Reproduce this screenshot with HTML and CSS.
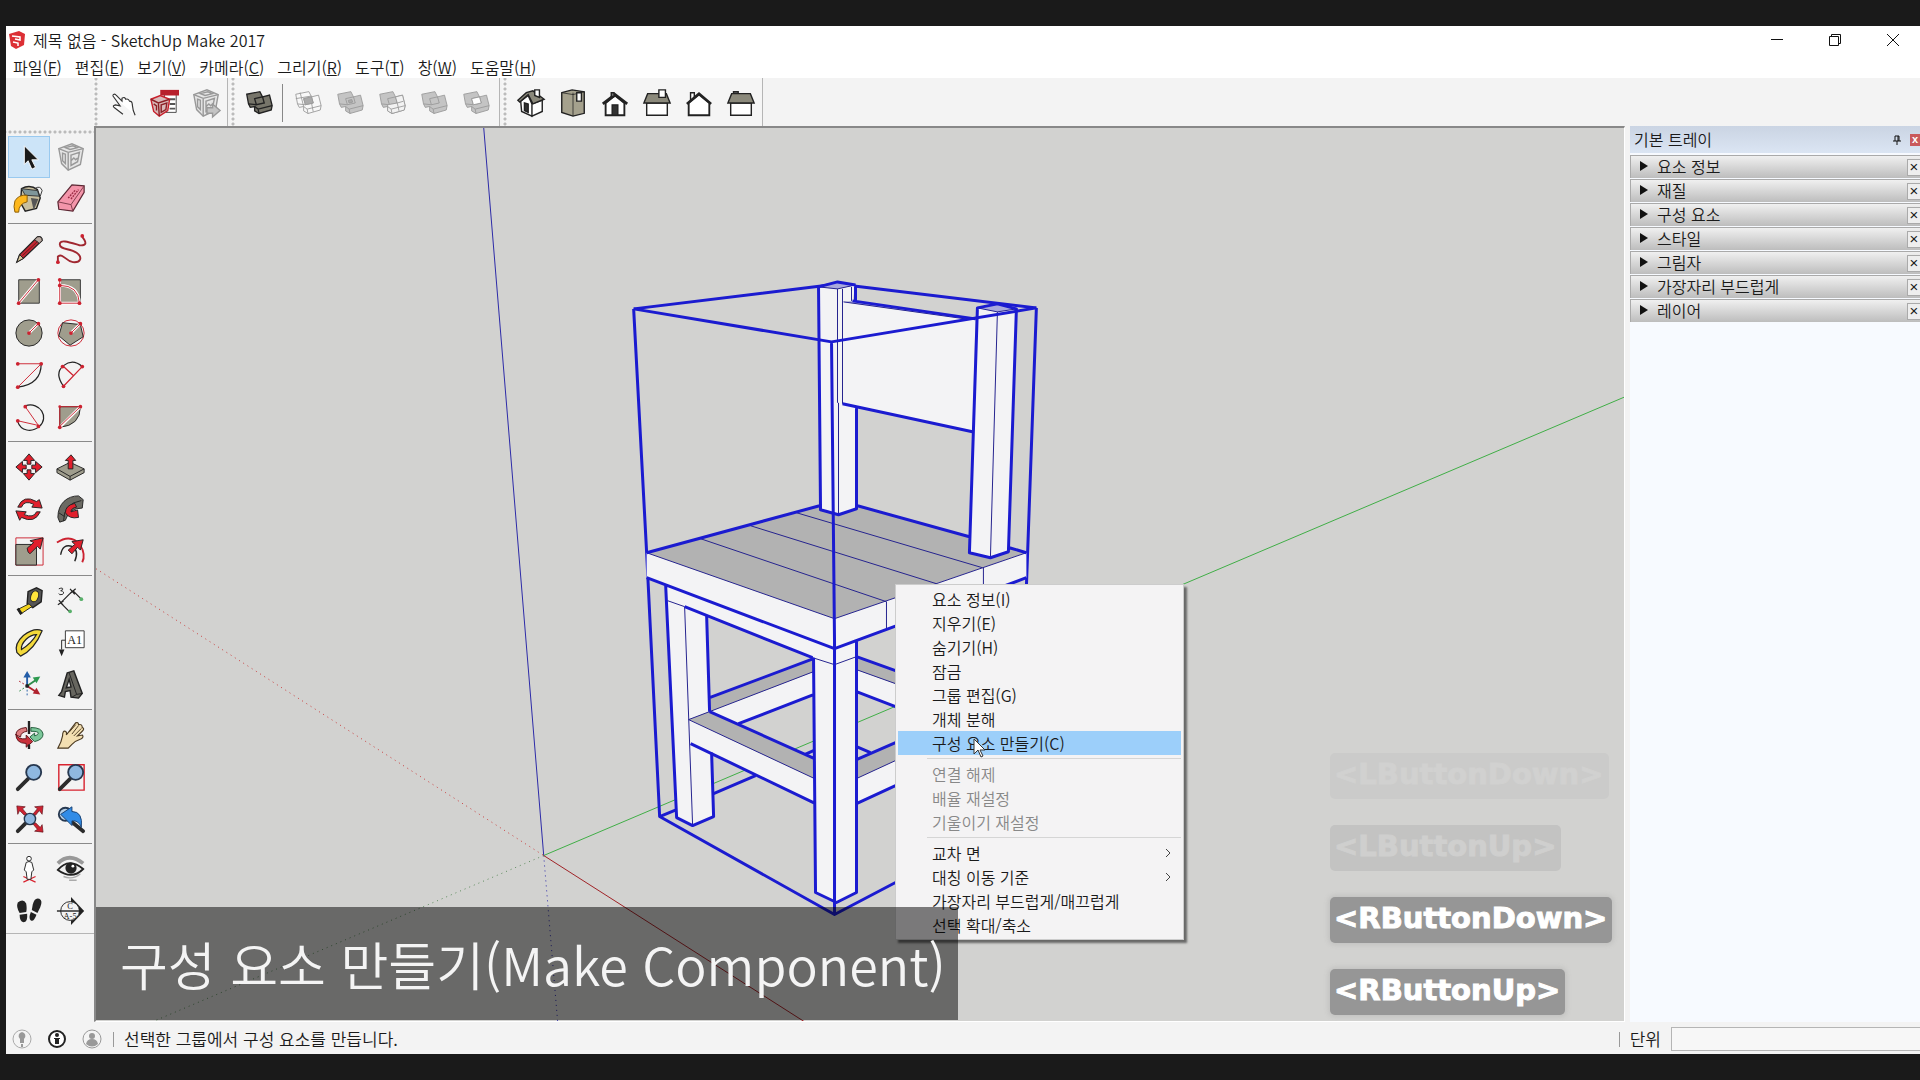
FILE: index.html
```html
<!DOCTYPE html>
<html lang="ko">
<head>
<meta charset="utf-8">
<title>제목 없음 - SketchUp Make 2017</title>
<link rel="stylesheet" href="styles.css">
</head>
<body>
<svg class="defs" aria-hidden="true">
  <symbol id="solids" viewBox="0 0 32 32"><path d="M2 6 17 3l3 6 8-2 3 12-1 5-14 4-5-3v-5l-5 1-2-4z"/><path d="M11 11l9-2 2 7-9 2zM4 17l9 1M11 20l4 3 16-4M15 23l1 5" fill="none"/></symbol>
  <symbol id="boxmark" viewBox="0 0 32 32"><path d="M3 7 17 2l12 5-3 17-13 6L6 23z"/><path d="M3 7l10 4 16-4M13 11v19M7 12l3 1v10l-3-3zM16 14l9-3-2 10-7 4zM16 20l3-3 2 2 2-2M10 6l8-2 5 2-8 2z" fill="none"/></symbol>
</svg>
<main class="app">
  <header class="titlebar">
    <svg class="logo" viewBox="0 0 16 18"><path d="M0 3 10 0l6 3-1 11-8 4-5-3z" fill="#dc2f35"/><path d="M3 5l8 1v3L6 8M4 11l5 1v3" fill="none" stroke="#fff" stroke-width="1.500"/></svg>
    <h1 class="title">제목 없음 - SketchUp Make 2017</h1>
    <div class="winbtns">
      <button aria-label="최소화"><svg viewBox="0 0 14 14"><path d="M1 6.500h12"/></svg></button>
      <button aria-label="이전 크기로"><svg viewBox="0 0 14 14"><path d="M1.500 3.500h9v9h-9zM3.500 3.500v-2h9v9h-2"/></svg></button>
      <button aria-label="닫기"><svg viewBox="0 0 14 14"><path d="M1 1l12 12M13 1 1 13"/></svg></button>
    </div>
  </header>
  <nav class="menubar">
    <button>파일(<u>F</u>)</button><button>편집(<u>E</u>)</button><button>보기(<u>V</u>)</button><button>카메라(<u>C</u>)</button><button>그리기(<u>R</u>)</button><button>도구(<u>T</u>)</button><button>창(<u>W</u>)</button><button>도움말(<u>H</u>)</button>
  </nav>
  <div class="toolbar">
    <div class="bar">
      <button aria-label="상호 작용"><svg class="ic" viewBox="0 0 32 32"><path d="M6 8q2-3 4 0l6 6v-3q3-2 4 1 3-1 4 2 3 0 3 4l1 6 2 5M6 8l8 11-5-1q-4 1-1 3l9 7" fill="#fff" stroke="#333" stroke-width="1.200"/></svg></button>
      <button aria-label="구성 요소"><svg class="ic" viewBox="0 0 32 32"><path d="M16 4h13v22H18z" fill="#fff" stroke="#444"/><path d="M12 2h20v6H12z" fill="#b8202c"/><path d="M22 12h6M22 17h6M22 22h6" stroke="#555" stroke-width="2"/><path d="M2 12l10-4 10 4-2 12-9 6-6-5z" fill="#d9b9b9" stroke="#c8202c" stroke-width="1.500"/><path d="M2 12l8 4 12-4M10 16l1 14M13 18l6-2-1 7-5 3zM5 17l3 2v5" fill="none" stroke="#8c2026" stroke-width="1.500"/></svg></button>
      <button aria-label="구성 요소 바꾸기"><svg class="ic mute" viewBox="0 0 32 32"><use href="#boxmark"/><path d="M17 21h6v-4l8 7-8 7v-4h-6z" fill="#c4c4c4"/></svg></button>
    </div>
    <div class="bar solids">
      <button aria-label="외부 쉘"><svg class="ic solid-on"><use href="#solids"/></svg></button>
      <i class="vline"></i>
      <button aria-label="교차"><svg class="ic solid-wire" viewBox="0 0 32 32"><use href="#solids"/><path d="M11 11l9-2 2 7-9 2z" fill="#aaa"/><path d="M7 4l4 16M2 11l18-3M20 16l2 10" fill="none"/></svg></button>
      <button aria-label="결합"><svg class="ic solid-off" viewBox="0 0 32 32"><use href="#solids"/><path d="M14 13l4-1 1 3-4 1z" fill="#aaa"/></svg></button>
      <button aria-label="빼기"><svg class="ic solid-off" viewBox="0 0 32 32"><use href="#solids"/><path d="M20 9l8-2 3 12-1 5-14 4-5-3v-7l11-2z" fill="#f2f2f2"/><path d="M11 20l4 3 16-4M15 23l1 5M22 16l7-2M22 16l2 9" fill="none"/></svg></button>
      <button aria-label="자르기"><svg class="ic solid-off"><use href="#solids"/></svg></button>
      <button aria-label="분할"><svg class="ic solid-off" viewBox="0 0 32 32"><use href="#solids"/><path d="M11 11l9-2 2 7-9 2z" fill="#fff"/></svg></button>
    </div>
    <div class="bar views">
      <button aria-label="등각 보기"><svg class="ic" viewBox="0 0 32 32"><path d="M5 14l8-6 4 9v13L6 25zM17 17l11-4v12l-11 5z" fill="#fff"/><path d="M9 16l4 1v9l-4-2z" fill="#333"/><path d="M2 13 11 5l7-2 12 9-12 5-5-10-9 8z" fill="#8b897b"/><path d="M20 2h5v8l-5-2z" fill="#fff"/></svg></button>
      <button aria-label="위에서"><svg class="ic" viewBox="0 0 32 32"><path d="M4 5 15 2l13 2v23l-12 3L4 26z" fill="#a5a18d"/><path d="M16 5v25M4 5l12 2 12-3" fill="none" stroke-width=".8"/><path d="M20 5h5v9h-5z" fill="#fff"/></svg></button>
      <button aria-label="앞에서"><svg class="ic" viewBox="0 0 32 32"><path d="M6 16v13h20V16L16 8z" fill="#fff" stroke-width="2"/><path d="M13 18h6v11h-6z" fill="#333"/><path d="M3 17 16 7l13 10" fill="none" stroke-width="3"/><path d="M12 5h3v4h-3z" fill="#777"/></svg></button>
      <button aria-label="오른쪽에서"><svg class="ic" viewBox="0 0 32 32"><path d="M5 16h22v13H5z" fill="#fff"/><path d="M6 6h20l4 10H2z" fill="#8b897b"/><path d="M18 2h7v8h-7z" fill="#fff"/></svg></button>
      <button aria-label="뒤에서"><svg class="ic" viewBox="0 0 32 32"><path d="M7 5h4v8H7z" fill="#fff"/><path d="M5 16v13h22V16L16 7z" fill="#fff" stroke-width="2"/><path d="M3 17 16 6l13 11" fill="none" stroke-width="2.500"/></svg></button>
      <button aria-label="왼쪽에서"><svg class="ic" viewBox="0 0 32 32"><path d="M5 16h22v13H5z" fill="#fff"/><path d="M8 4h5v3H8z" fill="#777"/><path d="M6 6h20l4 10H2z" fill="#8b897b"/></svg></button>
    </div>
  </div>

  <div class="work">
    <aside class="tools">
      <div class="grp">
        <button class="on" aria-label="선택"><svg class="ic" viewBox="0 0 32 32"><path d="M11 4v20l4-4 4 9 4-2-4-8h7z" fill="#1a1a1a" stroke="#fff"/></svg></button>
        <button aria-label="구성 요소 만들기"><svg class="ic mute"><use href="#boxmark"/></svg></button>
        <button aria-label="페인트 통"><svg class="ic" viewBox="0 0 32 32"><path d="M8 5q9-5 17 1l3 9-4 11-12 3-5-9z" fill="#c9bf9e" stroke="#222" stroke-width="1.500"/><path d="M8 5l17 2 2 6-15-1z" fill="#7f969a" stroke="#333"/><path d="M18 15l8 1-5 12z" fill="#555"/><path d="M22 5q6-4 8 2l-2 6" fill="none" stroke="#333"/><path d="M14 12q-9-1-13 6-2 6 0 12h4q0-9 9-11z" fill="#fdb71c" stroke="#8a5a00"/></svg></button>
        <button aria-label="지우개"><svg class="ic" viewBox="0 0 32 32"><path d="M2 19 17 1l13 1v7L18 29 3 27z" fill="#f495aa" stroke="#5b2733" stroke-width="1.300"/><path d="M2 19l14 3L30 2M16 22l2 7" fill="none" stroke="#7c3c4a"/><path d="M13 15l8-9M16 16l8-10" stroke="#9c2d46" stroke-width="1.500" stroke-dasharray="2 1"/></svg></button>
      </div>
      <div class="grp">
        <button aria-label="선"><svg class="ic" viewBox="0 0 32 32"><path d="M3 30l3-8L25 3q5-1 5 4L10 26z" fill="#c12832" stroke="#222" stroke-width="1.300"/><path d="M3 30l3-8 4 4z" fill="#d9c79a" stroke="#222"/><path d="M22 6l3-3q5-1 5 4l-3 3z" fill="#b9a9a0" stroke="#222"/><path d="M9 23 25 8" stroke="#6f141b"/></svg></button>
        <button aria-label="자유 곡선" class="r"><svg class="ic" viewBox="0 0 32 32"><path d="M28 3q8 10-3 9C15 9 4 5 4 11s11 4 18 9 4 11-4 10S8 20 2 24v5" fill="none" stroke="#a02730" stroke-width="2"/><circle cx="28" cy="2" r="2"/><circle cx="2" cy="30" r="2"/></svg></button>
        <button aria-label="직사각형" class="r"><svg class="ic" viewBox="0 0 32 32"><path d="M5 4h22v25H5z" fill="#9f9d8d" stroke="#333"/><path d="M5 29 26 4" stroke="#fff" stroke-width="3"/><path d="M5 29 26 4" stroke="#cc2230"/><circle cx="26" cy="4" r="2"/><circle cx="5" cy="29" r="2"/></svg></button>
        <button aria-label="회전된 직사각형" class="r"><svg class="ic" viewBox="0 0 32 32"><path d="M5 4h21v25H5z" fill="#9f9d8d" stroke="#333"/><path d="M4 4v25h22M4 10q20 0 21 19" fill="none" stroke="#fff" stroke-width="3"/><path d="M4 4v25h21M4 10q20 0 21 19" fill="none" stroke="#cc2230"/><circle cx="4" cy="4" r="2"/><circle cx="4" cy="10" r="2"/><circle cx="4" cy="29" r="2"/><circle cx="25" cy="29" r="2"/></svg></button>
        <button aria-label="원" class="r"><svg class="ic" viewBox="0 0 32 32"><path d="M30 16a14 14 0 1 1-28 0 14 14 0 1 1 28 0z" fill="#9f9d8d" stroke="#222"/><path d="M16 16 26 6" stroke="#fff" stroke-width="3"/><path d="M16 16 26 6" stroke="#cc2230"/><circle cx="16" cy="16" r="2"/><circle cx="26" cy="6" r="2"/></svg></button>
        <button aria-label="다각형" class="r"><svg class="ic" viewBox="0 0 32 32"><path d="M30 16a14 14 0 1 1-28 0 14 14 0 1 1 28 0z" fill="none" stroke="#cc2230"/><path d="M26 7l3 13-14 9L3 19l4-14z" fill="#9f9d8d" stroke="#222"/><path d="M16 16 26 6" stroke="#fff" stroke-width="3"/><path d="M16 16 26 6" stroke="#cc2230"/><circle cx="16" cy="16" r="2"/><circle cx="26" cy="6" r="2"/></svg></button>
        <button aria-label="호" class="r"><svg class="ic" viewBox="0 0 32 32"><path d="M29 4q0 22-25 25" fill="none" stroke="#222" stroke-width="1.300"/><path d="M4 4h25L4 29" fill="none" stroke="#cc2230"/><circle cx="4" cy="4" r="2"/><circle cx="29" cy="4" r="2"/><circle cx="4" cy="29" r="2"/></svg></button>
        <button aria-label="2점 호" class="r"><svg class="ic" viewBox="0 0 32 32"><path d="M8 28Q-2 14 8 6q10-8 20 1" fill="none" stroke="#222" stroke-width="1.300"/><path d="M8 28 28 7M8 7l11 10" fill="none" stroke="#cc2230" stroke-width="1.300"/><circle cx="8" cy="28" r="2"/><circle cx="28" cy="7" r="2"/><circle cx="7" cy="7" r="2"/></svg></button>
        <button aria-label="3점 호" class="r"><svg class="ic" viewBox="0 0 32 32"><path d="M12 4c16-5 26 13 15 22-8 7-20 5-23-5" fill="none" stroke="#222" stroke-width="1.300"/><path d="M12 5l14 20-22-5" fill="none" stroke="#cc2230"/><circle cx="12" cy="5" r="2"/><circle cx="26" cy="26" r="2"/><circle cx="4" cy="20" r="2"/></svg></button>
        <button aria-label="파이" class="r"><svg class="ic" viewBox="0 0 32 32"><path d="M4 5h22q0 20-22 22z" fill="#9f9d8d" stroke="#222"/><path d="M4 27 26 5" fill="none" stroke="#fff" stroke-width="3"/><path d="M4 27V5h22L4 26" fill="none" stroke="#cc2230"/><circle cx="4" cy="5" r="1.500"/><circle cx="26" cy="5" r="2"/><circle cx="4" cy="27" r="2"/></svg></button>
      </div>
      <div class="grp">
        <button aria-label="이동" class="fat"><svg class="ic" viewBox="0 0 32 32"><path d="M16 2l6 7h-4v4h-4V9h-4zM16 30l-6-7h4v-4h4v4h4zM2 16l7-6v4h4v4H9v4zM30 16l-7 6v-4h-4v-4h4v-4z"/></svg></button>
        <button aria-label="밀기/끌기" class="fat"><svg class="ic" viewBox="0 0 32 32"><path d="M1 18l14-7 15 7v4L15 30 1 22z" fill="#9f9d8d"/><path d="M1 18l14 8 15-8M15 26v4" fill="none"/><path d="M16 3l5 6h-3v9h-5V9h-3z"/></svg></button>
        <button aria-label="회전" class="fat"><svg class="ic" viewBox="0 0 32 32"><path d="M4 14Q10 0 24 8l3-2 3 9-11-1 2-3Q11 6 8 14zM28 19Q22 32 8 25l-2 3-4-10 11 1-2 3q10 4 13-3z"/></svg></button>
        <button aria-label="따라가기" class="fat"><svg class="ic" viewBox="0 0 32 32"><path d="M2 25C2 10 12 2 24 2l5 4-1 9q-14 0-18 13l-6 2z" fill="#6b6a63"/><path d="M8 29Q8 10 27 7M3 20l6 4" fill="none"/><path d="M10 20q0-8 10-10l2 4q-6 1-6 5l7-2 1 8q-10 2-14-5z"/></svg></button>
        <button aria-label="배율" class="fat"><svg class="ic" viewBox="0 0 32 32"><path d="M2 2h29v29H2z" fill="none" stroke="#cc2230"/><path d="M2 9h22v22H2z" fill="#9f9d8d"/><path d="M31 2l-3 12-3-3-8 8-2-2-1-4 7-6-4-2z"/></svg></button>
        <button aria-label="오프셋" class="fat"><svg class="ic" viewBox="0 0 32 32"><path d="M1 7Q16-3 26 10q6 10 2 18" fill="none" stroke="#cc2230" stroke-width="2"/><path d="M5 20q2-12 12-9 8 4 3 16" fill="none" stroke-width="1.500"/><path d="M29 4l-3 11-3-3-6 7-4-4 7-6-3-3z"/></svg></button>
      </div>
      <div class="grp">
        <button aria-label="줄자"><svg class="ic" viewBox="0 0 32 32"><path d="M15 6l9-4 6 3-1 12-9 6-6-4z" fill="#555" stroke="#222" stroke-width="1.500"/><ellipse cx="22" cy="11" rx="4" ry="6" fill="#ffe53b" stroke="#222" transform="rotate(20 22 11)"/><path d="M4 25l12-6 3 3L7 30z" fill="#f5d51e" stroke="#222"/><path d="M4 24l4 6" stroke="#222" stroke-width="3"/></svg></button>
        <button aria-label="치수"><svg class="ic" viewBox="0 0 32 32"><path d="M5 18 18 5M5 18l9 9M18 5l9 9M2 20l6-4M15 8l6-5M3 15l5 6M15 3l5 6" stroke="#222" stroke-width="1.300" fill="none"/><path d="M3 3q5-2 4 1l-2 1q5 1 2 4-4 1-4-1" stroke="#222" fill="none"/><circle cx="27" cy="14" r="2" fill="#58b06a"/><circle cx="15" cy="27" r="2" fill="#58b06a"/></svg></button>
        <button aria-label="각도기"><svg class="ic" viewBox="0 0 32 32"><path d="M30 3Q22-1 10 8 0 17 3 26l4 4Q22 23 30 3zM24 7q-5 9-16 16-1-5 5-11 5-5 11-5z" fill="#f3d93b" fill-rule="evenodd" stroke="#222" stroke-width="1.300"/></svg></button>
        <button aria-label="텍스트"><svg class="ic" viewBox="0 0 32 32"><path d="M10 3h20v18H10z" fill="#fff" stroke="#333"/><path d="M10 13H6v10" fill="none" stroke="#222"/><path d="M3 23h6l-3 7z" fill="#222"/><text x="20" y="17" class="a1">A1</text></svg></button>
        <button aria-label="축"><svg class="ic" viewBox="0 0 32 32"><path d="M14 17V5" stroke="#245ea8" stroke-width="2"/><path d="M10 8l4-7 4 7z" fill="#245ea8"/><path d="M14 17l9-6" stroke="#2e8b4a" stroke-width="2"/><path d="M20 8l8-1-4 7z" fill="#2e9a50"/><path d="M14 17l9 6" stroke="#b0232e" stroke-width="2"/><path d="M24 19l4 7-8-1z" fill="#b0232e"/><path d="M14 17l-10-6" stroke="#b0232e" stroke-dasharray="2 2"/><path d="M14 17l-9 6" stroke="#2e8b4a" stroke-dasharray="2 2"/><path d="M14 17v11" stroke="#245ea8" stroke-dasharray="2 2"/><circle cx="14" cy="17" r="2" fill="#222"/></svg></button>
        <button aria-label="3D 텍스트"><svg class="ic" viewBox="0 0 32 32"><path d="M12 3l7-2 9 24-4 5-8-1-1-7-5 1-1 6-6-2 3-4zM14 10l-3 9 5-1z" fill="#67665f" fill-rule="evenodd" stroke="#222" stroke-width="1.500"/><path d="M14 3l8 23 6-1M22 26l-5 3" fill="none" stroke="#222"/></svg></button>
      </div>
      <div class="grp">
        <button aria-label="궤도"><svg class="ic" viewBox="0 0 32 32"><path d="M13 8Q2 9 2 16l5 2q0-5 7-6z" fill="#dc7d80" stroke="#5c1118"/><path d="M18 8q12 0 13 7 0 6-9 8l-5-5 5-4v3q4-1 4-3t-8-2z" fill="#7cc79a" stroke="#1e5a38"/><path d="M2 15q2 6 11 5v-4l7 7-7 6v-4Q2 25 2 15z" fill="#c9303a" stroke="#5c1118"/><path d="M16 1v14M16 26v5" stroke="#222" stroke-width="2.500"/></svg></button>
        <button aria-label="이동 보기"><svg class="ic" viewBox="0 0 32 32"><path d="M2 30q4-7 5-13 0-6 3-5 2 1 1 4L21 3q3-1 3 2 4-1 4 3 3 1 0 4l-5 5 5-1q2 2-1 4-6 2-10 6l-4 4z" fill="#f3dfb2" stroke="#4b3a22" stroke-width="1.200"/><path d="M14 13l7-8M17 15l7-9M19 17l8-8" stroke="#4b3a22"/></svg></button>
        <button aria-label="확대/축소"><svg class="ic" viewBox="0 0 32 32"><path d="M4 29l11-11" stroke="#2b2b2b" stroke-width="4" stroke-linecap="round"/><circle cx="21" cy="11" r="8" fill="#8fb8e0" stroke="#27384f" stroke-width="2"/></svg></button>
        <button aria-label="창 확대"><svg class="ic" viewBox="0 0 32 32"><path d="M3 3h27v27H3z" fill="none" stroke="#d8232f" stroke-width="1.500"/><path d="M4 29l11-11" stroke="#2b2b2b" stroke-width="4" stroke-linecap="round"/><circle cx="21" cy="11" r="8" fill="#8fb8e0" stroke="#27384f" stroke-width="2"/></svg></button>
        <button aria-label="범위 확대"><svg class="ic" viewBox="0 0 32 32"><path d="M3 2l9 1-3 2 5 6-3 1-5-5-2 4zM31 2l-9 1 3 2-5 6 3 1 4-5 3 4zM31 30l-9-1 3-2-5-6 3-1 5 5 2-3z" fill="#cc2230" stroke="#5c1118" stroke-width=".7"/><path d="M4 29l8-8" stroke="#2b2b2b" stroke-width="4" stroke-linecap="round"/><circle cx="17" cy="16" r="6" fill="#8fb8e0" stroke="#27384f" stroke-width="1.500"/></svg></button>
        <button aria-label="이전"><svg class="ic" viewBox="0 0 32 32"><circle cx="10" cy="11" r="7" fill="#b4cee6" stroke="#27384f" stroke-width="2"/><path d="M18 20l11 9" stroke="#2b2b2b" stroke-width="4" stroke-linecap="round"/><path d="M5 11l12-8v5q12 0 10 17-3-8-10-7v5z" fill="#318ce7" stroke="#163f70"/></svg></button>
      </div>
      <div class="grp last">
        <button aria-label="카메라 위치"><svg class="ic" viewBox="0 0 32 32"><path d="M10 30l13-6M10 24l13 6" stroke="#d8232f" stroke-width="1.300"/><path d="M13 9q3-2 6 0l2 8-2 2-1 8h-4l-1-8-2-2z" fill="#fff" stroke="#222"/><circle cx="16" cy="5" r="2.500" fill="#fff" stroke="#222"/></svg></button>
        <button aria-label="둘러보기"><svg class="ic" viewBox="0 0 32 32"><path d="M2 10Q14-2 29 10" fill="none" stroke="#999" stroke-width="4"/><path d="M2 17Q14 3 29 16q-12 12-27 1z" fill="#eee" stroke="#222" stroke-width="2"/><circle cx="16" cy="15" r="6" fill="#222"/><circle cx="18" cy="13" r="1.500" fill="#fff"/><path d="M8 24q10 4 18-3M14 28h8" fill="none" stroke="#aaa" stroke-width="1.500"/></svg></button>
        <button aria-label="보행"><svg class="ic" viewBox="0 0 32 32"><path d="M4 7q6-5 9 1 1 6 0 9l-7 1Q2 12 4 7zM6 20l8-1q1 9-4 9-4-1-4-8zM20 9q2-8 7-6 4 2 1 9l-3 6-6-3zM18 17l6 3q-3 8-6 6-3-2 0-9z" fill="#222"/></svg></button>
        <button aria-label="단면"><svg class="ic" viewBox="0 0 32 32"><path d="M16 1l14 15-14 15z" fill="#222"/><circle cx="15" cy="16" r="10" fill="#f3f3f3" stroke="#222"/><path d="M1 16h28" stroke="#222" stroke-width="1.500"/><text x="15" y="14" class="sec">C</text><text x="15" y="24" class="sec">A-5</text></svg></button>
      </div>
    </aside>

    <section class="view">
      <svg class="scene" viewBox="95 127 1529 894" preserveAspectRatio="xMinYMin slice">
        <g fill="none" class="axes">
          <path d="M483 127 543 855" stroke="#2c2aa8"/><path d="M543 855 557 1022" stroke="#2c2aa8" stroke-dasharray="1 4"/>
          <path d="M543 855 1625 396" stroke="#3fae45"/><path d="M543 855 150 1022" stroke="#5a8a5a" stroke-dasharray="1 4"/>
          <path d="M543 855 805 1022" stroke="#a02226"/><path d="M95 568 543 855" stroke="#c83c3c" stroke-dasharray="1 4"/>
        </g>
        <g class="box"><path d="M633 308 837 283 1036 307M633 308 646 552 659 816 834 914 895 882M659 816 676 809M1036 307 1026 586M713 793 755 775M804 754 813 750M856 746 870 752"/></g>
        <g class="face">
          <path d="M709 711 813 671V694L738 723z"/><path class="top" d="M709 697 813 658V671L709 711z"/>
          <path d="M856 669 895 683V706L856 691z"/><path class="top" d="M856 656 895 670V683L856 669z"/>
          <path d="M856 778 895 760V785L856 803z"/><path class="top" d="M856 759 895 742V760L856 778z"/>
          <path d="M665 584 706 600 709 711 713 816 692 825 676 817z"/>
          <path d="M688 719 814 778V803L690 743z"/><path class="top" d="M688 719 709 711 814 758V778z"/>
          <path d="M665 584 834 648 856 640V656L834 664 812 657 667 600z"/>
          <path d="M813 655 834 662 856 654V892L836 902 815 892z"/>
          <path class="top" d="M646 552 819 505H857L1026 552 834 618z"/>
          <path d="M646 552 834 618V648L646 577z"/><path d="M834 618 1026 552V577L834 648z"/>
          <path d="M842 300 975 318 972 431 842 403z"/>
          <path d="M818 286 837 288 855 284 852 300H842V403L856 406V508L838 514 820 509z"/>
          <path d="M977 307 997 310 1016 308 1008 551 990 557 969 552z"/>
          <path class="tip" d="M818 286 837 281 855 284 837 288zM977 307 997 303 1016 308 997 311zM852 300 975 318 965 318 843 301z"/>
        </g>
        <g class="thin"><path d="M646 552 834 618 1026 552M796 512 982 567M750 525 936 583M700 538 886 601V628M983 567V590M837 288V402M842 288V403M838 402V514M851 286V300M843 301 965 318M997 311 990 557M667 600 684 606 692 825M812 657 834 664 856 656M709 711 813 671M688 719 709 711M688 719 814 778M856 669 895 683M856 778 895 760M856 778V803M818 286 837 288 855 284M977 307 997 311 1016 308"/></g>
        <g class="box"><path d="M646 552 819 505M857 505 969 536M1009 547 1026 552M646 577 834 648 1026 577M818 286 820 509 838 514 856 508V406M855 284V300M818 286 837 281 855 284M852 300 975 318M842 403 972 431M977 307 969 552 990 557 1008 551 1016 308 997 303zM665 584 676 817 692 825 713 816 711 752M684 606 812 657M706 614 709 711M709 697 813 658M738 723 813 694M709 711 814 758M690 743 815 803M813 657 815 892 836 902 856 892V640M856 656 895 670M856 691 895 706M856 759 895 742M856 803 895 785"/><path d="M633 308 831 341 1036 307M831 341 834 640V914"/></g>
      </svg>

      <ul class="keys">
        <li class="f1">&lt;LButtonDown&gt;</li><li class="f2">&lt;LButtonUp&gt;</li><li>&lt;RButtonDown&gt;</li><li>&lt;RButtonUp&gt;</li>
      </ul>

      <div class="ctx" role="menu">
        <button>요소 정보(I)</button><button>지우기(E)</button><button>숨기기(H)</button><button>잠금</button><button>그룹 편집(G)</button><button>개체 분해</button><button class="hot">구성 요소 만들기(C)</button>
        <hr>
        <button disabled>연결 해제</button><button disabled>배율 재설정</button><button disabled>기울이기 재설정</button>
        <hr>
        <button class="sub">교차 면<svg viewBox="0 0 6 10"><path d="M1 1l4 4-4 4"/></svg></button><button class="sub">대칭 이동 기준<svg viewBox="0 0 6 10"><path d="M1 1l4 4-4 4"/></svg></button><button>가장자리 부드럽게/매끄럽게</button><button>선택 확대/축소</button>
        <svg class="cursor" viewBox="0 0 13 20"><path d="M1 1v15l4-4 3 7 2-1-3-6h5z" fill="#fff" stroke="#333"/></svg>
      </div>
      <p class="caption">구성 요소 만들기(Make Component)</p>
    </section>

    <aside class="tray">
      <h2>기본 트레이<span><button class="pin" aria-label="고정"><svg viewBox="0 0 8 10"><path d="M2 6V1h4v5M0 6h8M4 6v4M5 1v5"/></svg></button><button class="x" aria-label="트레이 닫기">x</button></span></h2>
      <div class="row"><button class="name">요소 정보</button><button class="rm" aria-label="닫기">×</button></div>
      <div class="row"><button class="name">재질</button><button class="rm" aria-label="닫기">×</button></div>
      <div class="row"><button class="name">구성 요소</button><button class="rm" aria-label="닫기">×</button></div>
      <div class="row"><button class="name">스타일</button><button class="rm" aria-label="닫기">×</button></div>
      <div class="row"><button class="name">그림자</button><button class="rm" aria-label="닫기">×</button></div>
      <div class="row"><button class="name">가장자리 부드럽게</button><button class="rm" aria-label="닫기">×</button></div>
      <div class="row"><button class="name">레이어</button><button class="rm" aria-label="닫기">×</button></div>
    </aside>
  </div>

  <footer class="status">
    <svg viewBox="0 0 20 20"><circle cx="10" cy="10" r="9" fill="#f4f4f4" stroke="#aaa"/><path d="M10 3a4 4 0 0 1 2 7v4H8v-4a4 4 0 0 1 2-7zM9 15h2v3H9z" fill="#999"/></svg>
    <svg viewBox="0 0 20 20"><circle cx="10" cy="10" r="8" fill="#fff" stroke="#222" stroke-width="2"/><circle cx="10" cy="6" r="2" fill="#222"/><path d="M7 9h6v1h-1v5H8v-5H7z" fill="#222"/></svg>
    <svg viewBox="0 0 20 20"><circle cx="10" cy="10" r="9" fill="#f4f4f4" stroke="#999"/><circle cx="10" cy="7" r="3" fill="#999"/><path d="M4 15q1-5 6-5t6 5q-6 5-12 0z" fill="#999"/></svg>
    <i class="bar1"></i>
    <span class="msg">선택한 그룹에서 구성 요소를 만듭니다.</span>
    <i class="bar1"></i>
    <label for="unit">단위</label><input id="unit" type="text">
  </footer>
</main>
</body>
</html>
```
FILE: styles.css
```css
* { box-sizing: border-box; }
body {
  margin: 0;
  background: #1a1a1a;
  color: #1a1a1a;
  font: 16px/24px "Noto Sans CJK KR", "Noto Sans", sans-serif;
  font-weight: 350;
  overflow: hidden;
}
button { margin: 0; padding: 0; border: 0; background: none; color: inherit; font: inherit; }
h1, h2, p, ul { margin: 0; padding: 0; font-weight: inherit; }
.defs { position: absolute; width: 0; height: 0; }
.app {
  display: flex;
  flex-direction: column;
  min-height: calc(100vh - 52px);
  margin: 26px 0 26px 6px;
  background: #f3f3f3;
}

.titlebar { display: flex; align-items: center; gap: 8px; height: 28px; padding-left: 3px; background: #fff; }
.logo { width: 16px; height: 18px; }
.title { flex: 1; font-size: 16px; }
.winbtns { display: flex; gap: 4px; }
.winbtns button { display: flex; width: 54px; height: 28px; align-items: center; justify-content: center; }
.winbtns svg { width: 14px; height: 14px; fill: none; stroke: #111; }

.menubar { display: flex; gap: 13px; height: 24px; padding-left: 7px; background: #fff; line-height: 26px; }
.menubar button { white-space: nowrap; }

.toolbar { display: flex; height: 48px; padding-left: 87px; }
.bar { display: flex; align-items: center; padding: 2px 0 0 8px; border-right: 1px solid #b5b5b5; background: #f5f5f5 radial-gradient(circle at 2px 2px, #bbb 1px, transparent 2px) 1px 4px / 4px 5px repeat-y; }
.bar + .bar { margin-left: 2px; padding-left: 8px; }
.bar.solids { padding-right: 2px; }
.bar button, .grp button { display: flex; align-items: center; justify-content: center; width: 42px; height: 42px; }
.ic { width: 30px; height: 30px; overflow: visible; }
.vline { width: 1px; height: 38px; margin: 0 4px 0 2px; background: #888; }
.mute { fill: #e6e6e6; stroke: #999; stroke-width: 1.5px; }
.solids .ic { width: 28px; height: 28px; }
.solid-on { fill: #77756a; stroke: #222; stroke-width: 1.5px; }
.solid-off { fill: #c4c4c4; stroke: #999; }
.solid-wire { fill: #f8f8f8; stroke: #999; }
.views .ic { stroke: #222; stroke-width: 1.5px; }

.work { display: flex; flex: 1; }
.tools { align-self: flex-start; width: 88px; padding: 10px 2px 1px; border-bottom: 1px solid #b5b5b5; background: radial-gradient(circle at 2px 2px, #bbb 1px, transparent 2px) 2px 4px / 5px 4px repeat-x; }
.grp { display: grid; grid-template-columns: 42px 42px; padding-bottom: 3px; margin-bottom: 4px; border-bottom: 1px solid #8a8a8a; }
.grp.last { margin: 0; padding: 0; border: 0; }
.grp .on { border: 1px solid #99c9ef; background: #cce4f8; }
.r circle { fill: #cc2230; }
.fat .ic { fill: #e11f2c; stroke: #222; stroke-width: 1px; }
.a1 { font: 13px "Liberation Serif", serif; text-anchor: middle; fill: #222; }
.sec { font: 9px "Liberation Serif", serif; text-anchor: middle; fill: #222; }

.view { position: relative; flex: 1; min-width: 0; border: solid; border-width: 2px 1px 1px 2px; border-color: #888 #fff #fff #888; background: #d2d2d0; overflow: hidden; }
.scene { position: absolute; width: 100%; height: 100%; }
.axes, .thin { fill: none; stroke-width: 1px; }
.thin { stroke: #25238f; }
.box { fill: none; stroke: #1b1bd0; stroke-width: 3px; stroke-linejoin: round; }
.face { fill: #f3f3f5; }
.face .top { fill: #b2b2b2; }
.face .tip { fill: #a9a9dc; }

.keys { position: absolute; right: 0; bottom: 6px; width: 294px; display: flex; flex-direction: column; align-items: flex-start; gap: 26px; list-style: none; }
.keys li { height: 46px; padding: 0 5px 0 4px; border-radius: 5px; background: #969696; color: #fff; font: bold 29px/42px "DejaVu Sans", sans-serif; -webkit-text-stroke: 1px; box-shadow: 0 0 4px 2px rgba(150,150,150,.25); }
.keys .f1 { background: #cbcbca; color: #d1d1d0; box-shadow: none; }
.keys .f2 { background: #c3c3c2; color: #cfcfce; box-shadow: none; }

.ctx { position: absolute; left: 799px; top: 456px; width: 289px; padding: 2px 2px 2px; border: 1px solid #ccc; background: #f4f3f4; box-shadow: 3px 3px 2px rgba(0,0,0,.5); }
.ctx button { display: flex; align-items: center; justify-content: space-between; width: 100%; height: 24px; padding: 0 10px 0 34px; line-height: 22px; text-align: left; }
.ctx .hot { background: #9ccffa; }
.ctx button:disabled { color: #888; }
.ctx .sub svg { width: 6px; height: 10px; fill: none; stroke: #444; }
.ctx hr { height: 1px; margin: 3px 0 3px 29px; border: 0; background: #d5d5d5; }
.cursor { position: absolute; left: 77px; top: 153px; width: 13px; height: 20px; }
.caption { position: absolute; left: 0; bottom: 1px; padding: 0 12px 0 24px; background: rgba(0,0,0,.5); color: #f4f4f4; font-size: 52px; line-height: 113px; white-space: nowrap; }

.tray { width: 290px; margin-left: 5px; background: #f7faff; }
.tray h2 { display: flex; justify-content: space-between; height: 27px; margin-bottom: 2px; padding-left: 4px; background: linear-gradient(#cad4e3, #dbe5f3); font-size: 16px; line-height: 26px; }
.tray span { display: flex; align-items: center; gap: 9px; }
.pin svg { display: block; width: 8px; height: 10px; fill: none; stroke: #111; }
.x { width: 10px; height: 12px; background: #c9595c; color: #fff; font: bold 11px/11px "Liberation Sans", sans-serif; }
.row { display: flex; align-items: center; height: 23px; margin-bottom: 1px; border: solid #aaa; border-width: 1px 0 0 1px; background: linear-gradient(#f0f0f0, #bdbdbd); }
.name { flex: 1; display: flex; align-items: center; gap: 9px; height: 22px; padding: 0 0 2px 9px; line-height: 20px; text-align: left; }
.name::before { content: ""; border: solid transparent; border-width: 5px 0 5px 8px; border-left-color: #111; }
.rm { width: 13px; height: 17px; border: 1px solid #aaa; border-right: 0; background: #eee; font: 15px/14px "Liberation Sans", sans-serif; }

.status { display: flex; align-items: center; height: 32px; padding: 2px 0 0 6px; }
.status svg { width: 20px; height: 20px; margin-right: 15px; }
.bar1 { width: 1px; height: 15px; margin-right: 10px; background: #999; }
.status svg + .bar1 { margin-left: -4px; }
.msg { flex: 1; font-size: 17px; }
.status label { margin-right: 10px; font-size: 17px; }
.status input { width: 249px; height: 24px; border: 1px solid #b5b5b5; border-right: 0; background: #f7f7f7; font: inherit; }
```
